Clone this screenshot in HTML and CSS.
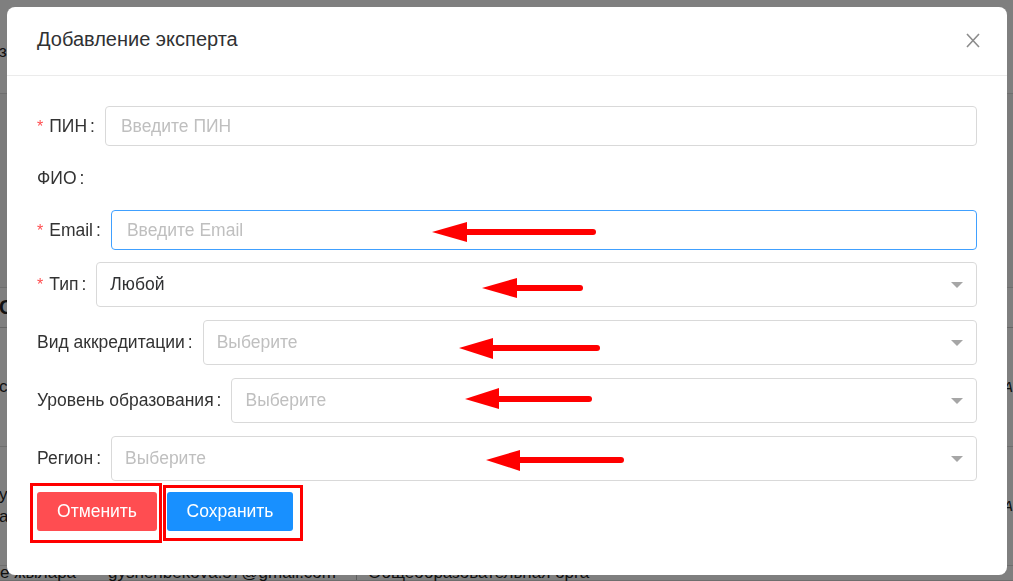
FILE: index.html
```html
<!DOCTYPE html>
<html lang="ru">
<head>
<meta charset="utf-8">
<title>Добавление эксперта</title>
<link rel="stylesheet" href="styles.css">
</head>
<body>
<div class="page">
  <div class="bg-row bg-r1"><span class="bg-left">з</span></div>
  <div class="bg-row bg-r2"></div>
  <div class="bg-row bg-r3"><span class="bg-left bold">С</span></div>
  <div class="bg-row bg-r4"><span class="bg-left">с</span><span class="bg-right">А</span></div>
  <div class="bg-row bg-r5"><span class="bg-left stack">у<br>а</span><span class="bg-right">А</span></div>
  <div class="bg-row bg-r6"><span class="c1">е жылара</span><span class="c2">gyshenbekova.57@gmail.com</span><span class="c3">Общеобразовательная орга</span></div>
</div>
<div class="overlay"></div>

<div class="modal">
  <div class="modal-header">
    <span class="modal-title">Добавление эксперта</span>
    <svg class="close" width="14" height="15" viewBox="0 0 14 15"><path d="M1 1L13 14M13 1L1 14" stroke="#8c8c8c" stroke-width="1.6" fill="none"/></svg>
  </div>
  <div class="modal-body">
    <div class="row r-pin">
      <label class="lbl req">ПИН</label>
      <div class="field"><span class="ph">Введите ПИН</span></div>
    </div>
    <div class="row r-fio">
      <label class="lbl">ФИО</label>
    </div>
    <div class="row r-email">
      <label class="lbl req">Email</label>
      <div class="field focus"><span class="ph">Введите Email</span></div>
    </div>
    <div class="row r-sel">
      <label class="lbl req">Тип</label>
      <div class="field select"><span class="val">Любой</span><span class="caret"></span></div>
    </div>
    <div class="row r-sel">
      <label class="lbl">Вид аккредитации</label>
      <div class="field select"><span class="ph">Выберите</span><span class="caret"></span></div>
    </div>
    <div class="row r-sel">
      <label class="lbl">Уровень образования</label>
      <div class="field select"><span class="ph">Выберите</span><span class="caret"></span></div>
    </div>
    <div class="row r-sel">
      <label class="lbl">Регион</label>
      <div class="field select"><span class="ph">Выберите</span><span class="caret"></span></div>
    </div>
    <div class="actions">
      <button class="btn btn-cancel">Отменить</button>
      <button class="btn btn-save">Сохранить</button>
    </div>
  </div>
</div>

<svg class="annot" width="1013" height="581" viewBox="0 0 1013 581">
  <g fill="#ff0000" stroke="#ff0000" stroke-linecap="round">
    <line x1="462" y1="232" x2="593" y2="232" stroke-width="6"/>
    <polygon points="432,232 467,222 467,242" stroke="none"/>
    <line x1="512" y1="288" x2="580" y2="288" stroke-width="6"/>
    <polygon points="482,288 517,278 517,298" stroke="none"/>
    <line x1="488" y1="348" x2="597" y2="348" stroke-width="6"/>
    <polygon points="459,348 493,338 493,359" stroke="none"/>
    <line x1="494" y1="399" x2="589" y2="399" stroke-width="6"/>
    <polygon points="465,399 499,388 499,409" stroke="none"/>
    <line x1="515" y1="460" x2="621" y2="460" stroke-width="6"/>
    <polygon points="486,460 520,450 520,471" stroke="none"/>
  </g>
  <g fill="none" stroke="#ff0000" stroke-width="3">
    <rect x="31.5" y="484.5" width="129" height="57"/>
    <rect x="164.5" y="486.5" width="137" height="53"/>
  </g>
</svg>
</body>
</html>
```

FILE: styles.css
```css
* { box-sizing: border-box; }

html, body {
  margin: 0;
  padding: 0;
  width: 1013px;
  height: 581px;
  overflow: hidden;
  font-family: "Liberation Sans", Arial, sans-serif;
}

.page {
  width: 1013px;
  height: 581px;
  background: #ffffff;
  display: flex;
  flex-direction: column;
  color: #222;
  font-size: 17px;
}

.bg-row {
  display: flex;
  align-items: center;
  justify-content: space-between;
  border-bottom: 1px solid #ddd;
}
.bg-r1 { height: 95px; padding-top: 10px; }
.bg-r2 { height: 195px; background: #f7f7f7; }
.bg-r3 { height: 40px; border-bottom: 1px solid #ccc; }
.bg-r4 { height: 120px; }
.bg-r5 { height: 120px; }
.bg-r6 { flex: 1; align-items: flex-end; justify-content: flex-start; line-height: 14px; }

.bg-left { margin-left: -1px; }
.bg-left.bold { font-weight: bold; font-size: 20px; }
.bg-left.stack { line-height: 22px; }
.bg-right { font-style: italic; margin-right: 0; font-size: 15px; }
.c1 { width: 108px; }
.c2 { width: 249px; border-right: 1px solid #bbb; }
.c3 { padding-left: 11px; }

.overlay {
  position: fixed;
  inset: 0;
  background: rgba(0, 0, 0, 0.5);
}

.modal {
  position: fixed;
  left: 7px;
  top: 7px;
  width: 1000px;
  height: 568px;
  background: #fff;
  border-radius: 8px;
  display: flex;
  flex-direction: column;
}

.modal-header {
  height: 69px;
  padding: 0 27px 0 30px;
  border-bottom: 1px solid #ebebeb;
  display: flex;
  align-items: center;
  justify-content: space-between;
}

.modal-title {
  font-size: 20px;
  color: #303133;
  margin-bottom: 3px;
}

.close { display: block; margin-bottom: 2px; }

.modal-body {
  padding: 30px 30px 0 30px;
  display: flex;
  flex-direction: column;
}

.row {
  display: flex;
  align-items: center;
}
.r-pin { height: 40px; }
.r-fio { height: 40px; margin-top: 12px; }
.r-email { height: 40px; margin-top: 12px; }
.r-sel { height: 45px; margin-top: 12px; }
.r-sel + .r-sel { margin-top: 13px; }

.lbl {
  font-size: 17.5px;
  color: #333;
  white-space: nowrap;
  flex: none;
}
.lbl.req::before {
  content: "*";
  color: #ff4d4f;
  margin-right: 6px;
  font-size: 16px;
}
.lbl::after {
  content: ":";
  margin-left: 3px;
  margin-right: 10px;
}

.field {
  flex: 1;
  height: 100%;
  border: 1px solid #d9d9d9;
  border-radius: 4px;
  display: flex;
  align-items: center;
  padding: 0 15px;
  font-size: 17.5px;
}
.field.focus { border-color: #40a0ff; }
.field.select { justify-content: space-between; padding-right: 13px; padding-left: 13px; }

.ph { color: #bfbfbf; }
.val { color: #303133; }

.caret {
  width: 0;
  height: 0;
  border-left: 6px solid transparent;
  border-right: 6px solid transparent;
  border-top: 6px solid #a6a6a6;
}

.actions {
  margin-top: 11px;
  display: flex;
  gap: 10px;
}

.btn {
  height: 39px;
  border: none;
  border-radius: 3px;
  color: #fff;
  font-family: "Liberation Sans", Arial, sans-serif;
  font-size: 17.5px;
  padding: 0;
  margin-left: 0;
}
.btn-cancel { width: 120px; background: #ff4d51; }
.btn-save { width: 126px; background: #1890ff; }

.annot {
  position: fixed;
  left: 0;
  top: 0;
  pointer-events: none;
}
```
